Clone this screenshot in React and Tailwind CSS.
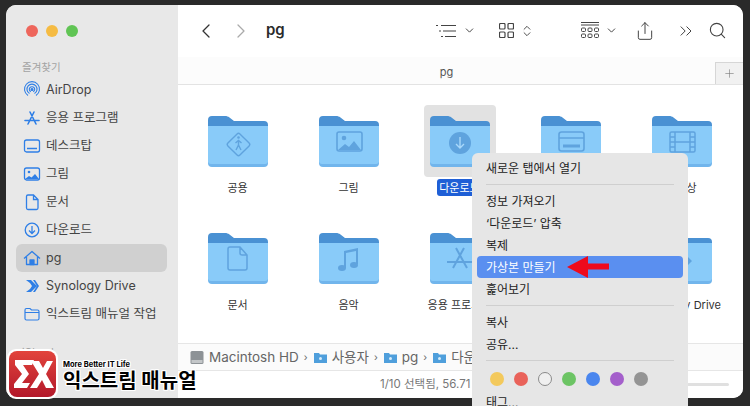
import React from "react";
import { ChevronLeft, ChevronRight, ChevronDown, ChevronsUpDown, ChevronsRight, Search, Plus, Share } from "lucide-react";

const glyphs = {
  walk: (
    <g fill="none" stroke="#5fa3de" strokeWidth="1.4">
      <rect x="22" y="20" width="17" height="17" rx="2" transform="rotate(45 30.5 28.5)" />
      <circle cx="30.5" cy="21.5" r="1.3" fill="#5fa3de" stroke="none" />
      <path d="M30.5 24v5l-2.5 5M30.5 29l2.5 5M27.5 27l3-2.5 3 2.5" />
    </g>
  ),
  image: (
    <g>
      <rect x="18" y="16" width="25" height="19" rx="2" fill="none" stroke="#5fa3de" strokeWidth="1.6" />
      <circle cx="25" cy="22" r="2.3" fill="#5fa3de" />
      <path d="M19 34l7-6 4 3 5-6 7 9z" fill="#5fa3de" />
    </g>
  ),
  download: (
    <g>
      <circle cx="30" cy="27" r="11" fill="#5fa3de" />
      <path d="M30 21v11M26 28l4 4 4-4" fill="none" stroke="#a9d8fb" strokeWidth="1.4" />
    </g>
  ),
  desktop: (
    <g fill="none" stroke="#5fa3de" strokeWidth="1.6">
      <rect x="18" y="16" width="25" height="19" rx="2.5" />
      <path d="M18 22h25" />
      <path d="M22 30h17" strokeWidth="3" />
    </g>
  ),
  film: (
    <g fill="none" stroke="#5fa3de" strokeWidth="1.5">
      <rect x="18" y="16" width="25" height="20" rx="1.5" />
      <path d="M23 16v20M38 16v20M23 26h15M18 21h5M18 26h5M18 31h5M38 21h5M38 26h5M38 31h5" />
    </g>
  ),
  doc: (
    <path d="M22 14h10l7 8v13a2 2 0 0 1-2 2H22a2 2 0 0 1-2-2V16a2 2 0 0 1 2-2zM32 14v6a2 2 0 0 0 2 2h5" fill="none" stroke="#5fa3de" strokeWidth="1.5" />
  ),
  music: (
    <g fill="#5fa3de">
      <path d="M25 18l14-3v16h-2V18l-10 2v15h-2z" />
      <ellipse cx="23" cy="35" rx="4" ry="3" />
      <ellipse cx="35" cy="32" rx="4" ry="3" />
    </g>
  ),
  apps: (
    <g fill="none" stroke="#5fa3de" strokeWidth="2">
      <path d="M34 15L23 35M26 15l11 20M17 29h26" />
    </g>
  ),
  sync: <path d="M26 20l8 8-8 8h6l8-8-8-8z" fill="#5fa3de" />,
};

const rows = [
  { name: "공용", glyph: "walk" },
  { name: "그림", glyph: "image" },
  { name: "다운로드", glyph: "download", selected: true },
  { name: "", glyph: "desktop" },
  { name: "동영상", glyph: "film" },
  { name: "문서", glyph: "doc" },
  { name: "음악", glyph: "music" },
  { name: "응용 프로그램", glyph: "apps" },
  { name: "", glyph: "doc" },
  { name: "Synology Drive", glyph: "sync" },
];

const Folder = ({ glyph }) => (
  <svg width="60" height="51" viewBox="0 0 60 51">
    <path d="M0 4a4 4 0 0 1 4-4h13c2 0 3 .5 4.500 1.500L26 5h30a4 4 0 0 1 4 4v8H0z" fill="#4a91d3" />
    <path d="M0 10h60v37a4 4 0 0 1-4 4H4a4 4 0 0 1-4-4z" fill="#71b5ec" />
    <path d="M0 10h60v36a3 3 0 0 1-3 2H3a3 3 0 0 1-3-2z" fill="#89cbf9" />
    {glyphs[glyph]}
  </svg>
);

const sideIcons = {
  airdrop: (
    <g fill="none" stroke="#2f7fe6" strokeWidth="1.1">
      <path d="M5 14.500a7.500 7.500 0 1 1 8 0M6.500 12.500a5 5 0 1 1 5 0M7.800 10.800a2.700 2.700 0 1 1 2.400 0" />
      <circle cx="9" cy="8.500" r="1" fill="#2f7fe6" />
    </g>
  ),
  apps: (
    <g fill="none" stroke="#2f7fe6" strokeWidth="1.6" strokeLinecap="round">
      <path d="M11 3L5 15M7 3l6 12M2 11.500h14" />
    </g>
  ),
  desktop: (
    <g fill="none" stroke="#2f7fe6" strokeWidth="1.3">
      <rect x="1.500" y="3" width="15" height="12" rx="2" />
      <path d="M4 11.500h10" strokeWidth="1.600" />
    </g>
  ),
  image: (
    <g>
      <rect x="1.500" y="3" width="15" height="12" rx="2" fill="none" stroke="#2f7fe6" strokeWidth="1.3" />
      <circle cx="6" cy="7" r="1.300" fill="#2f7fe6" />
      <path d="M2 14l4-3 2.500 1.500L12 9l4 5z" fill="#2f7fe6" />
    </g>
  ),
  doc: (
    <path d="M5 2h5.500L15 6.500V15a1.500 1.500 0 0 1-1.500 1.500h-8.500A1.500 1.500 0 0 1 3.500 15V3.500A1.500 1.500 0 0 1 5 2zM10.500 2v4.500H15" fill="none" stroke="#2f7fe6" strokeWidth="1.300" />
  ),
  download: (
    <g fill="none" stroke="#2f7fe6" strokeWidth="1.300">
      <circle cx="9" cy="9" r="6.800" />
      <path d="M9 5v7M6 9.500l3 3 3-3" />
    </g>
  ),
  home: (
    <g fill="none" stroke="#2f7fe6" strokeWidth="1.300" strokeLinejoin="round">
      <path d="M1 9.500L9 2.500l8 7M3.500 8v7.500h11V8" />
      <path d="M7 15.500V11h4v4.500z" fill="#2f7fe6" />
    </g>
  ),
  synology: (
    <path d="M3 3h5l6 6-6 6H3l4-3 2-3-2-3zM10 3h2l4 6-4 6h-2l4-6z" fill="#2f7fe6" />
  ),
  folder: (
    <path d="M2 5a1.500 1.500 0 0 1 1.500-1.500H7L8.500 5h6A1.500 1.500 0 0 1 16 6.500v7a1.500 1.500 0 0 1-1.500 1.500h-11A1.500 1.500 0 0 1 2 13.500zM2 7.500h14" fill="none" stroke="#2f7fe6" strokeWidth="1.200" />
  ),
};

const sidebarItems = [
  { label: "AirDrop", icon: "airdrop" },
  { label: "응용 프로그램", icon: "apps" },
  { label: "데스크탑", icon: "desktop" },
  { label: "그림", icon: "image" },
  { label: "문서", icon: "doc" },
  { label: "다운로드", icon: "download" },
  { label: "pg", icon: "home", active: true },
  { label: "Synology Drive", icon: "synology" },
  { label: "익스트림 매뉴얼 작업", icon: "folder" },
];

const MenuItem = ({ children, active }) => (
  <div className={`h-[22px] mx-[5px] px-[9px] pt-px flex items-center rounded-[4px] ${active ? "bg-[#5a8ff0] text-white" : "text-[#222]"}`}>
    {children}
  </div>
);

const MenuSep = () => (
  <div className="h-[11px] flex items-center px-[14px]">
    <div className="h-px w-full bg-[#cfcfcf]" />
  </div>
);

const tagColors = [
  "bg-[#f3c95c]",
  "bg-[#e9625a]",
  "bg-[#f0f0f0] border border-[#8a8a8a]",
  "bg-[#6cc464]",
  "bg-[#4a86ee]",
  "bg-[#a45fcb]",
  "bg-[#949494]",
];

const PathFolder = () => (
  <svg width="13" height="11" viewBox="0 0 13 11" className="ml-px">
    <path d="M0 1h5l1 1.500h7V11H0z" fill="#4f9fdc" />
    <rect x="5" y="5" width="3" height="3" rx="1.500" fill="#d5ecfb" />
  </svg>
);

const App = () => {
  return (
    <div className="relative w-[750px] h-[406px] overflow-hidden bg-[#2a2a2a] pt-[5px] pl-[6px] pr-[7px] pb-2 font-['Inter','Noto_Sans_CJK_KR',sans-serif]">
      <div className="flex h-[393px] rounded-[10px] overflow-hidden bg-white">
        {/* Sidebar */}
        <div className="w-[172px] shrink-0 bg-[#e8e8e8] px-[10px]">
          <div className="flex gap-2 pl-[10px] pt-5">
            <span className="w-3 h-3 rounded-full bg-[#ee665c]" />
            <span className="w-3 h-3 rounded-full bg-[#f5bb43]" />
            <span className="w-3 h-3 rounded-full bg-[#60c454]" />
          </div>
          <div className="mt-[24px] pl-[6px] text-[10.500px] leading-[14px] text-[#a3a3a3]">즐겨찾기</div>
          <div className="mt-[1px]">
            {sidebarItems.map((item) => (
              <div key={item.label} className={`h-7 flex items-center gap-[5px] pl-[7px] w-[151px] rounded-[6px] text-[12.500px] text-[#444] ${item.active ? "bg-[#d0d0d0]" : ""}`}>
                <svg width="18" height="18" viewBox="0 0 18 18">{sideIcons[item.icon]}</svg>
                <span className="whitespace-nowrap">{item.label}</span>
              </div>
            ))}
          </div>
          <div className="mt-[17px] pl-[6px] text-[10.500px] text-[#a3a3a3]">iCloud</div>
        </div>

        {/* Main */}
        <div className="flex-1 min-w-0 flex flex-col">
          <div className="h-[52px] flex items-center pb-[1px] shrink-0 text-[#444] bg-white">
            <ChevronLeft size={24} strokeWidth={1.300} className="ml-[16px] text-[#333]" />
            <ChevronRight size={24} strokeWidth={1.300} className="ml-[11px] text-[#aaa]" />
            <span className="ml-[13px] text-[15px] font-semibold text-[#2a2a2a]">pg</span>
            <svg width="21" height="14" viewBox="0 0 21 14" className="ml-[151px]" fill="none" stroke="#444" strokeWidth="1.200">
              <path d="M0 1.500h2M5 1.500h15M3 7h2M7 7h13M5 12.500h2M9 12.500h11" />
            </svg>
            <ChevronDown size={13} strokeWidth={1.800} className="ml-[6px]" />
            <svg width="15" height="15" viewBox="0 0 15 15" className="ml-[23px]" fill="none" stroke="#444" strokeWidth="1.200">
              <rect x="0.500" y="0.500" width="5.500" height="5.500" rx="1" />
              <rect x="9" y="0.500" width="5.500" height="5.500" rx="1" />
              <rect x="0.500" y="9" width="5.500" height="5.500" rx="1" />
              <rect x="9" y="9" width="5.500" height="5.500" rx="1" />
            </svg>
            <ChevronsUpDown size={14} strokeWidth={1.600} className="ml-[6px]" />
            <svg width="18" height="17" viewBox="0 0 18 17" className="ml-[47px]" fill="none" stroke="#444" strokeWidth="1">
              <path d="M0 .5h18M0 3h18" />
              <rect x=".5" y="6" width="4" height="3.500" rx="1" />
              <rect x="7" y="6" width="4" height="3.500" rx="1" />
              <rect x="13.500" y="6" width="4" height="3.500" rx="1" />
              <rect x=".5" y="12" width="4" height="3.500" rx="1" />
              <rect x="7" y="12" width="4" height="3.500" rx="1" />
              <rect x="13.500" y="12" width="4" height="3.500" rx="1" />
            </svg>
            <ChevronDown size={13} strokeWidth={1.800} className="ml-[6px]" />
            <Share size={20} strokeWidth={1.200} className="ml-[17px]" />
            <ChevronsRight size={20} strokeWidth={1.200} className="ml-[21px]" />
            <Search size={19} strokeWidth={1.400} className="ml-[12px]" />
          </div>
          <div className="h-[28px] shrink-0 flex border-b border-[#e3e3e3] bg-[#fcfcfc]">
            <div className="flex-1 text-center text-[11px] leading-[28px] text-[#555] pt-[1px]">pg</div>
            <div className="w-[28px] mt-[5px] flex items-center justify-center border-l border-t border-[#d6d6d6] bg-[#f1f1f1] text-[#777]">
              <Plus size={13} strokeWidth={1.100} />
            </div>
          </div>

          <div className="flex-1 min-h-0 pl-[4px] pt-[20px] grid grid-cols-[repeat(5,111px)] auto-rows-[117px]">
            {rows.map((f, i) => (
              <div key={i} className="flex flex-col items-center">
                <div className={`w-[72px] h-[72px] pt-[11px] flex justify-center rounded-[4px] ${f.selected ? "bg-[#e2e2e2]" : ""}`}>
                  <Folder glyph={f.glyph} />
                </div>
                <div className={`mt-[2px] h-[17px] px-[2px] rounded-[3px] text-[11px] leading-[19px] whitespace-nowrap ${f.selected ? "bg-[#1f5fd6] text-white" : "text-[#333]"}`}>
                  {f.name}
                </div>
              </div>
            ))}
          </div>

          <div className="h-[28px] shrink-0 flex items-center gap-[5px] pl-[12px] border-t border-b border-[#e6e6e6] bg-[#fbfbfb] text-[13.500px] text-[#666] whitespace-nowrap">
            <svg width="14" height="13" viewBox="0 0 14 13"><rect x="0.500" width="13" height="13" rx="1.500" fill="#8d9296" /><rect x="1.500" y="9" width="11" height="3" fill="#c3c6c8" /></svg>
            <span>Macintosh HD</span><span className="text-[10px]">›</span>
            <PathFolder /><span>사용자</span><span className="text-[10px]">›</span>
            <PathFolder /><span>pg</span><span className="text-[10px]">›</span>
            <PathFolder /><span>다운로드</span>
          </div>
          <div className="h-[27px] shrink-0 flex items-center pl-[202px] bg-white text-[11.500px] text-[#777] whitespace-nowrap">
            1/10 선택됨, 56.71 GB 사용 가능
            <div className="ml-auto mr-[14px] w-[42px] h-[3px] rounded-full bg-[#e0e0e0]" />
          </div>
        </div>
      </div>

      {/* Context menu */}
      <div className="absolute left-[472px] top-[153px] w-[216px] pt-[4px] pb-3 rounded-t-[6px] bg-[#e6e6e6] text-[12px]">
        <MenuItem>새로운 탭에서 열기</MenuItem>
        <MenuSep />
        <MenuItem>정보 가져오기</MenuItem>
        <MenuItem>‘다운로드’ 압축</MenuItem>
        <MenuItem>복제</MenuItem>
        <MenuItem active>가상본 만들기</MenuItem>
        <MenuItem>훑어보기</MenuItem>
        <MenuSep />
        <MenuItem>복사</MenuItem>
        <MenuItem>공유...</MenuItem>
        <MenuSep />
        <div className="h-[25px] flex items-center gap-[10px] pl-[18px]">
          {tagColors.map((c) => (
            <span key={c} className={`w-[14px] h-[14px] rounded-full ${c}`} />
          ))}
        </div>
        <MenuItem>태그...</MenuItem>
      </div>

      {/* Red arrow */}
      <svg width="42" height="22" viewBox="0 0 42 22" className="absolute left-[567px] top-[256px]">
        <path d="M0 11L21 0v7.500h21v6H21V22z" fill="#ee0a1c" />
      </svg>

      {/* Watermark */}
      <div className="absolute left-[7px] top-[349px] flex items-start">
        <div className="w-[51px] h-[50px] rounded-[9px] bg-white p-[2px]">
          <svg width="47" height="46" viewBox="0 0 47 46">
            <defs>
              <linearGradient id="logoRed" x1="0" y1="0" x2="0" y2="1">
                <stop offset="0" stopColor="#e2443c" />
                <stop offset="1" stopColor="#b3182a" />
              </linearGradient>
            </defs>
            <rect width="47" height="46" rx="8" fill="url(#logoRed)" />
            <path d="M6 9h19l-2 5H14l6 9-7 9h8l-3 5H5v-4l8-10-7-9z" fill="#fff" />
            <path d="M22 10h8l4 7 4-7h6l-7 13 8 14h-8l-4-8-5 8h-7l9-14z" fill="#fff" />
          </svg>
        </div>
        <div className="ml-[5px] mt-[11px] font-bold text-black [text-shadow:-1px_0_#fff,1px_0_#fff,0_-1px_#fff,0_1px_#fff,1px_1px_#fff,-1px_-1px_#fff,1px_-1px_#fff,-1px_1px_#fff]">
          <div className="text-[7.500px] leading-[9px] whitespace-nowrap">More Better IT Life</div>
          <div className="text-[20px] leading-[24px] whitespace-nowrap">익스트림 매뉴얼</div>
        </div>
      </div>
    </div>
  );
};

export default App;
